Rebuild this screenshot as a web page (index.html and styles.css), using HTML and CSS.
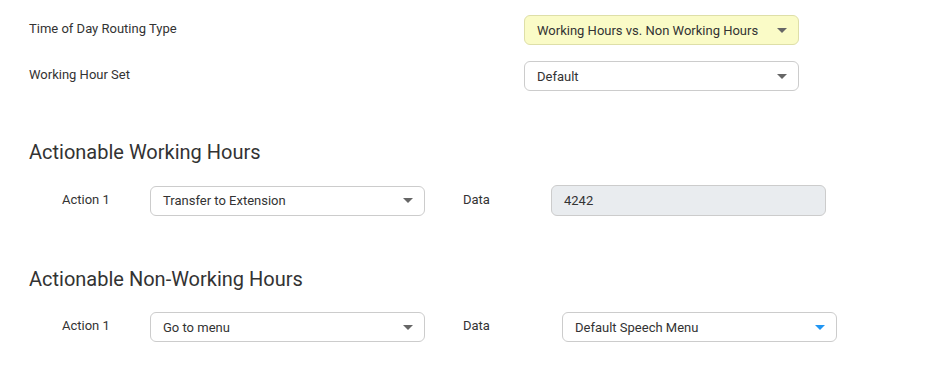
FILE: index.html
```html
<!DOCTYPE html>
<html lang="en">
<head>
  <meta charset="UTF-8">
  <title>Time of Day Routing</title>
  <link rel="stylesheet" href="styles.css">
</head>
<body>
  <div class="page">
    <div class="field-row">
      <div class="field-label">Time of Day Routing Type</div>
      <div class="select highlight">
        <span>Working Hours vs. Non Working Hours</span>
        <span class="caret"></span>
      </div>
    </div>
    <div class="field-row">
      <div class="field-label">Working Hour Set</div>
      <div class="select">
        <span>Default</span>
        <span class="caret"></span>
      </div>
    </div>

    <h2 class="section-title first">Actionable Working Hours</h2>
    <div class="action-row">
      <div class="action-label">Action 1</div>
      <div class="select">
        <span>Transfer to Extension</span>
        <span class="caret"></span>
      </div>
      <div class="data-label">Data</div>
      <div class="input readonly">4242</div>
    </div>

    <h2 class="section-title">Actionable Non-Working Hours</h2>
    <div class="action-row">
      <div class="action-label">Action 1</div>
      <div class="select">
        <span>Go to menu</span>
        <span class="caret"></span>
      </div>
      <div class="data-label wide">Data</div>
      <div class="select">
        <span>Default Speech Menu</span>
        <span class="caret blue"></span>
      </div>
    </div>
  </div>
</body>
</html>
```

FILE: styles.css
```css
* {
  box-sizing: border-box;
}
body {
  margin: 0;
  font-family: Roboto, "Liberation Sans", sans-serif;
  font-size: 13px;
  color: #333;
  background: #fff;
}
.page {
  padding: 15px 0 0 29px;
}
.field-row {
  display: flex;
  align-items: center;
  height: 30px;
  margin-bottom: 16px;
}
.field-label {
  width: 495px;
  margin-top: -3px;
}
.select,
.input {
  width: 275px;
  height: 30px;
  border: 1px solid #ccc;
  border-radius: 6px;
  padding: 0 12px;
  display: flex;
  align-items: center;
  justify-content: space-between;
  background: #fff;
}
.select.highlight {
  background: #fafbc7;
  border-color: #dedfa8;
}
.input.readonly {
  height: 31px;
  background: #e9ecef;
  border-color: #ccc;
}
.caret {
  width: 0;
  height: 0;
  border-left: 5px solid transparent;
  border-right: 5px solid transparent;
  border-top: 5px solid #666;
  margin-right: -1px;
}
.caret.blue {
  border-top-color: #2196f3;
}
.section-title {
  font-size: 20px;
  font-weight: 400;
  line-height: 24px;
  margin: 0 0 21px;
  color: #333;
}
.section-title.first {
  margin-top: 49px;
}
.action-row {
  display: flex;
  align-items: center;
  padding-left: 33px;
  margin-bottom: 51px;
}
.action-row:last-child {
  margin-bottom: 0;
}
.action-label {
  width: 88px;
  margin-top: -3px;
}
.data-label {
  margin-left: 38px;
  width: 88px;
  margin-top: -3px;
}
.data-label.wide {
  width: 99px;
}
```
